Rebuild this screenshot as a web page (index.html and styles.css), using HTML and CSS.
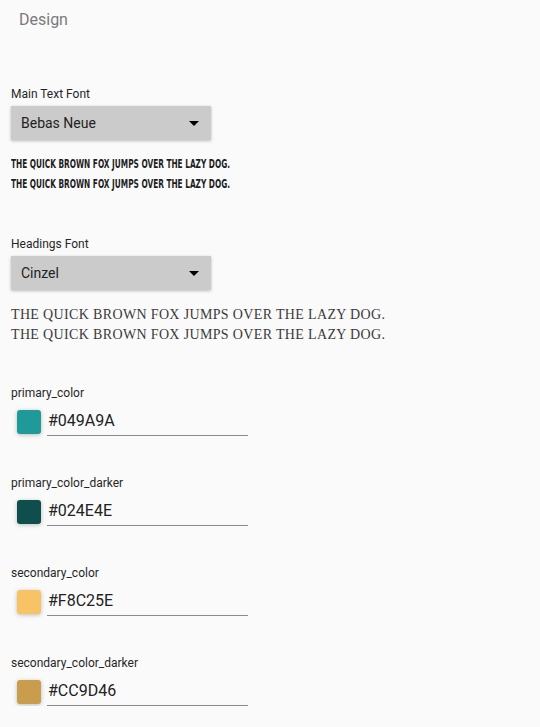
FILE: index.html
```html
<!DOCTYPE html>
<html>
<head>
<meta charset="utf-8">
<link rel="stylesheet" href="styles.css">
</head>
<body>
<div class="page">
  <div class="title">Design</div>

  <div class="field first">
    <div class="label">Main Text Font</div>
    <div class="select"><span>Bebas Neue</span><span class="arrow"></span></div>
    <div class="sample bebas">
      <div><span class="narrow">The quick brown fox jumps over the lazy dog.</span></div>
      <div><span class="narrow">The quick brown fox jumps over the lazy dog.</span></div>
    </div>
  </div>

  <div class="field second">
    <div class="label">Headings Font</div>
    <div class="select"><span>Cinzel</span><span class="arrow"></span></div>
    <div class="sample cinzel">
      <div>The quick brown fox jumps over the lazy dog.</div>
      <div>The quick brown fox jumps over the lazy dog.</div>
    </div>
  </div>

  <div class="color-field lead">
    <div class="label">primary_color</div>
    <div class="color-row"><span class="swatch c1"></span><div class="input">#049A9A</div></div>
  </div>
  <div class="color-field">
    <div class="label">primary_color_darker</div>
    <div class="color-row"><span class="swatch c2"></span><div class="input">#024E4E</div></div>
  </div>
  <div class="color-field">
    <div class="label">secondary_color</div>
    <div class="color-row"><span class="swatch c3"></span><div class="input">#F8C25E</div></div>
  </div>
  <div class="color-field">
    <div class="label">secondary_color_darker</div>
    <div class="color-row"><span class="swatch c4"></span><div class="input">#CC9D46</div></div>
  </div>
</div>
</body>
</html>
```

FILE: styles.css
```css
html, body {
  margin: 0;
  padding: 0;
  background: #fafafa;
}
body {
  font-family: Roboto, "Liberation Sans", sans-serif;
  color: #222;
}
.page {
  padding: 0 0 0 11px;
}
.title {
  padding-top: 10px;
  padding-left: 8px;
  font-size: 16px;
  line-height: 20px;
  color: #7a7a7a;
}
.label {
  font-size: 12px;
  line-height: 16px;
  color: #262626;
}
.field.first {
  margin-top: 56px;
}
.field.second {
  margin-top: 42px;
}
.select {
  margin-top: 4px;
  width: 200px;
  height: 34px;
  box-sizing: border-box;
  padding: 0 12px 0 10px;
  background: #cbcbcb;
  box-shadow: 0 1px 3px rgba(0, 0, 0, 0.25);
  display: flex;
  align-items: center;
  justify-content: space-between;
  font-size: 14px;
  color: #222;
}
.arrow {
  width: 0;
  height: 0;
  border-left: 5px solid transparent;
  border-right: 5px solid transparent;
  border-top: 5px solid #000;
}
.sample.bebas {
  margin-top: 14px;
  font-family: "DejaVu Sans Condensed", "DejaVu Sans", sans-serif;
  font-weight: bold;
  font-size: 12.5px;
  line-height: 20px;
  text-transform: uppercase;
  color: #1e1e1e;
  white-space: nowrap;
}
.narrow {
  display: inline-block;
  transform: scaleX(0.655);
  transform-origin: left center;
}
.sample.cinzel {
  margin-top: 15px;
  font-family: "Liberation Serif", serif;
  font-size: 14px;
  line-height: 20px;
  text-transform: uppercase;
  letter-spacing: 0.35px;
  color: #3a3a3a;
}
.color-field {
  margin-top: 39px;
}
.color-field.lead {
  margin-top: 40px;
}
.color-row {
  margin-top: 9px;
  display: flex;
  align-items: flex-start;
  gap: 6px;
  padding-left: 6px;
}
.swatch {
  width: 24px;
  height: 24px;
  border-radius: 3px;
  box-shadow: 0 1px 4px rgba(0, 0, 0, 0.25);
  flex: none;
}
.c1 { background: #1f9a98; }
.c2 { background: #0e4f4e; }
.c3 { background: #f8c365; }
.c4 { background: #c99d4d; }
.input {
  width: 201px;
  height: 26px;
  box-sizing: border-box;
  border-bottom: 1px solid #8a8a8a;
  font-size: 16px;
  line-height: 21px;
  padding-left: 1px;
  color: #222;
}
```
